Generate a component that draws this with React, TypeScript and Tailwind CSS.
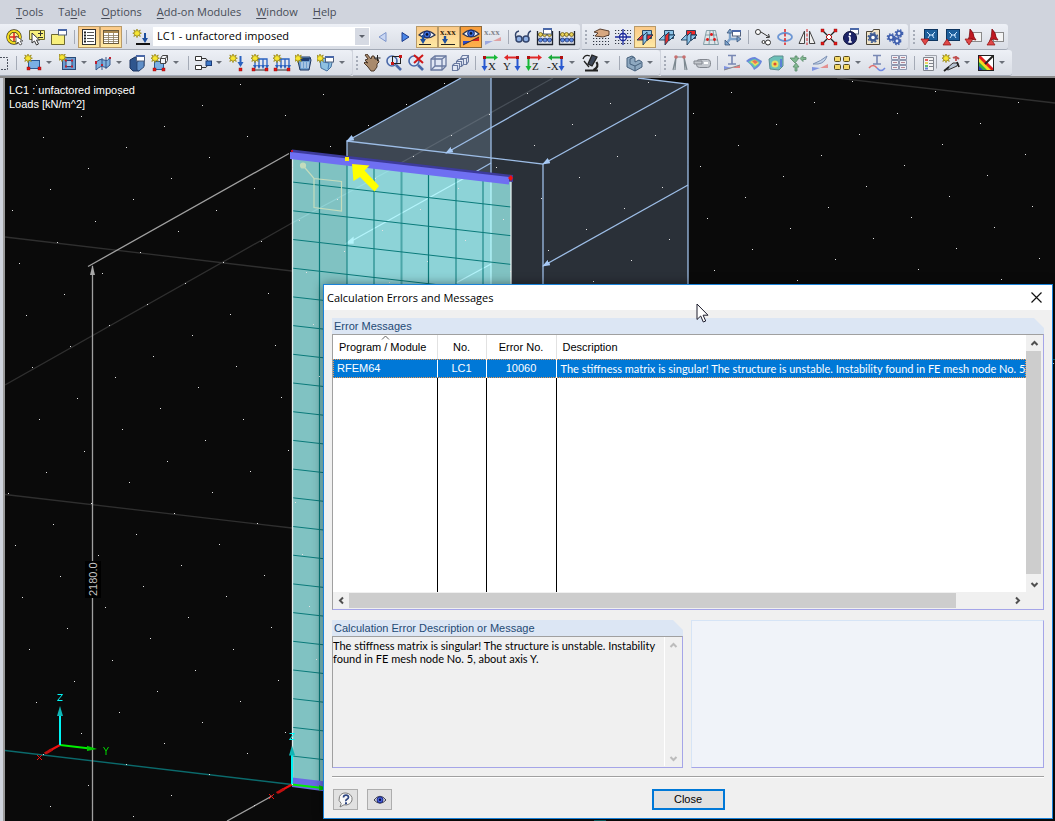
import React from "react";

type Node = React.ReactNode;

/* ---------- icon building blocks (18 x 18 canvas) ---------- */

const Star = ({ x = 0, y = 0 }: { x?: number; y?: number }) => (
  <path
    transform={`translate(${x} ${y})`}
    d="M4 0l.9 2.3L7.3 1 6.2 3.3 8.4 4.2 6.2 5 7.3 7.4 4.9 6.2 4 8.6 3.1 6.2.8 7.4 1.9 5-.2 4.2l2.1-.9L.8 1l2.3 1.3z"
    fill="#f7e632"
    stroke="#8f7d10"
    strokeWidth=".7"
  />
);

const Red = ({ x, y }: { x: number; y: number }) => (
  <rect x={x} y={y} width="3" height="3" fill="#e01818" stroke="#8c0808" strokeWidth=".4" />
);

const Win = ({ x, y }: { x: number; y: number }) => (
  <g>
    <rect x={x + 0.5} y={y + 0.5} width="8" height="5.5" fill="#fff" stroke="#51607c" />
    <rect x={x} y={y} width="9" height="2" fill="#4a68a8" />
  </g>
);

const Eye = ({ y = 0 }: { y?: number }) => (
  <g transform={`translate(0 ${y})`}>
    <path d="M1 6Q9-2 17 6Q9 12 1 6z" fill="#f4f7ff" stroke="#2c3550" strokeWidth="1.2" />
    <circle cx="9" cy="5.4" r="3.4" fill="#3c6fd8" stroke="#16286c" />
    <circle cx="9" cy="5.4" r="1.3" fill="#0b1230" />
  </g>
);

const Plane = ({ flat, upright, back }: { flat: string; upright: string; back: string }) => (
  <g stroke="#1b3a58" strokeWidth=".9" strokeLinejoin="round">
    <rect x="6.5" y="2.5" width="9" height="8" fill={back} />
    <path d="M1 12l5-5h11l-5 5z" fill={flat} />
    <path d="M7 8l4-4v8l-4 5z" fill={upright} />
    <path d="M11 7h6l-5 5h-1z" fill={flat} />
  </g>
);

const Axes = ({ letter, flip, h, v }: { letter: string; flip?: boolean; h: string; v: string }) => (
  <g>
    <g transform={flip ? "translate(18 0) scale(-1 1)" : undefined}>
      <path d="M3 3.5h12" stroke={h} strokeWidth="2" />
      <path d="M13 .5l4 3-4 3z" fill={h} />
      <path d="M3.5 3v10" stroke={v} strokeWidth="2" />
      <path d="M.5 12l3 5 3-5z" fill={v} />
      <rect x="2" y="2" width="3" height="3" fill="#b01010" />
    </g>
    <text x={flip ? 0 : 7} y="16" fontSize="11" fontFamily="Liberation Serif, serif" fill="#1a1a1a">
      {letter}
    </text>
  </g>
);

const Loads = () => (
  <g>
    <path d="M4 5h12v8M8 5v8M12 5v8M4 5v8" fill="none" stroke="#2a62c0" strokeWidth="1.3" />
    <path d="M2 11l2 4 2-4zM6 11l2 4 2-4zM10 11l2 4 2-4zM14 11l2 4 2-4z" fill="#2a62c0" />
    <Star />
    <path d="M4 16h10" stroke="#333" />
    <Red x={1} y={14} />
    <Red x={14} y={14} />
  </g>
);

const Abacus = () => (
  <g>
    <path d="M1.5 3v14M16.5 3v14M1 16.5h16M2 11.5h14M2 6.5h14" stroke="#20242e" strokeWidth="1.3" fill="none" />
    <g fill="#e6cf58" stroke="#665510" strokeWidth=".7">
      <circle cx="4.5" cy="6.5" r="2" />
      <circle cx="8.5" cy="6.5" r="2" />
      <circle cx="13.5" cy="6.5" r="2" />
    </g>
    <g fill="#5a86e0" stroke="#1d3474" strokeWidth=".7">
      <circle cx="4.5" cy="12" r="2" />
      <circle cx="9" cy="12" r="2" />
      <circle cx="13.5" cy="12" r="2" />
    </g>
  </g>
);

const Xxx = ({ fill }: { fill: string }) => (
  <text x="0" y="7" fontSize="9" fontWeight="bold" fontFamily="Liberation Serif, serif" fill={fill}>
    x.xx
  </text>
);

const Monitor = () => (
  <g>
    <rect x="4.5" y="1.5" width="13" height="11" fill="#1d5f9c" stroke="#0e3560" />
    <path d="M7 4l3 3-2 3M15 4l-3 3 2 3M9 7h5" stroke="#c8e4ff" fill="none" />
  </g>
);

const Pdf = () => (
  <g>
    <rect x="7.5" y="4.5" width="10" height="9" fill="#f4f4f4" stroke="#8a8a8a" />
    <path d="M6 1q4 4 4 8l2 3-5-1-4 4q3-6 3-14z" fill="#c01820" stroke="#7c0a10" strokeWidth=".8" />
  </g>
);

const DownRed = () => <path d="M1 11h8l-4 6z" fill="#e04848" stroke="#8c1010" strokeWidth=".7" />;
const UpRed = () => <path d="M1 17h8l-4-6z" fill="#e04848" stroke="#8c1010" strokeWidth=".7" />;

const Zoomer = () => (
  <g>
    <circle cx="7" cy="7" r="5" fill="#dfeaf8" stroke="#4a68a8" strokeWidth="1.6" />
    <path d="M11 11l5 5" stroke="#4a68a8" strokeWidth="2.6" />
  </g>
);

const icons: Record<string, Node> = {
  target: (
    <g>
      <circle cx="8" cy="9" r="6" fill="#fff4a0" stroke="#3c3510" strokeWidth="3.4" />
      <circle cx="8" cy="9" r="6" fill="none" stroke="#f4dc20" strokeWidth="2.2" />
      <path d="M8 5v8M4 9h8" stroke="#e02020" strokeWidth="1.5" />
      <path d="M10 8v8l2-2 2 3 2-1-2-3h3z" fill="#fff" stroke="#444" strokeWidth=".8" />
    </g>
  ),
  pickBox: (
    <g>
      <path d="M1.5 2.5h15v9h-15z" fill="#f8f07c" stroke="#6e6a30" />
      <path d="M10 5.5h5M12.5 3v5M10 9.5h5" stroke="#333" />
      <path d="M4 5v10l2.5-2 2 4 2-1-2-4h3z" fill="#fff" stroke="#333" />
    </g>
  ),
  folder: (
    <g>
      <path d="M1.5 6.5h13v10h-13z" fill="#f8f07c" stroke="#6e6a30" />
      <Win x={8} y={1} />
    </g>
  ),
  list: (
    <g>
      <rect x="2.5" y="1.5" width="13" height="15" fill="#fff" stroke="#333" />
      <path d="M4 4.5h2M4 7.5h2M4 10.5h2M4 13.5h2" stroke="#222" strokeWidth="2" />
      <path d="M7 4.5h7M7 7.5h7M7 10.5h7M7 13.5h7" stroke="#555" />
    </g>
  ),
  table: (
    <g>
      <rect x="1.5" y="2.5" width="15" height="13" fill="#fff" stroke="#6a5a3c" />
      <path d="M2 4h14" stroke="#a88850" strokeWidth="2" />
      <path d="M2 7.5h14M2 9.5h14M2 11.5h14M2 13.5h14M6.5 5v10M11.5 5v10" stroke="#8c7c60" strokeWidth=".8" />
    </g>
  ),
  newLoad: (
    <g>
      <Star x={1} y={1} />
      <path d="M13 5v7" stroke="#1d4f9e" strokeWidth="2" />
      <path d="M10 10h6l-3 5z" fill="#1d4f9e" />
      <path d="M4 16h14" stroke="#111" strokeWidth="2" />
    </g>
  ),
  prev: <path d="M12 4.5v9L5 9z" fill="#c8d6f2" stroke="#7e96cc" />,
  next: <path d="M6 4.5v9L13 9z" fill="#4a86e8" stroke="#1c3c8c" />,
  eyeArrow: (
    <g>
      <Eye y={1} />
      <path d="M5 7v6" stroke="#1d4f9e" strokeWidth="2.4" />
      <path d="M2 11h6l-3 5z" fill="#1d4f9e" />
      <path d="M1 16.5h12" stroke="#222" />
    </g>
  ),
  xArrow: (
    <g>
      <Xxx fill="#3c2c10" />
      <path d="M5 8v5" stroke="#1d4f9e" strokeWidth="2.4" />
      <path d="M2 11h6l-3 5z" fill="#1d4f9e" />
      <path d="M1 16.5h14" stroke="#222" />
    </g>
  ),
  eyeSlope: (
    <g>
      <Eye />
      <path d="M1 17v-4h8z" fill="#2a48c8" />
      <path d="M17 9v4H9z" fill="#d82020" />
      <path d="M1 17L17 9" stroke="#222" strokeWidth=".8" />
    </g>
  ),
  xSlope: (
    <g opacity=".8">
      <Xxx fill="#6c7078" />
      <path d="M1 17v-4h8z" fill="#8a9ae0" />
      <path d="M17 9v4H9z" fill="#e09090" />
    </g>
  ),
  glasses: (
    <g fill="#8fb0e4" stroke="#33456c" strokeWidth="1.5">
      <path d="M2 10Q0 4 5 3M14 8q0-4 3-5" fill="none" />
      <circle cx="5" cy="11" r="3" />
      <circle cx="12" cy="11" r="3" />
    </g>
  ),
  abacusWin: (
    <g>
      <Abacus />
      <Win x={7} y={0} />
    </g>
  ),
  abacus: <Abacus />,
  handGrid: (
    <g>
      <path d="M1 7.5h16M1 10.5h16M1 13.5h16M1 16.5h16" stroke="#2f3542" strokeWidth="1.2" strokeDasharray="1.2 1.8" />
      <path d="M2 4l6-3 9 2v4l-6 2-8-1 3-3z" fill="#d8a880" stroke="#5a4030" />
    </g>
  ),
  gridCross: (
    <g>
      <path d="M1 2.5h16M1 5.5h16M1 12.5h16M1 15.5h16" stroke="#2f3542" strokeWidth="1.2" strokeDasharray="1.2 1.8" />
      <circle cx="9" cy="9" r="3.5" fill="#fff" stroke="#1c2a9c" strokeWidth="1.3" />
      <path d="M9 1v16M1 9h16" stroke="#1c2a9c" strokeWidth="1.3" />
    </g>
  ),
  planeXY: <Plane flat="#e83030" upright="#8cc4e8" back="#8cc4e8" />,
  planeYZ: <Plane flat="#8cc4e8" upright="#e83030" back="#8cc4e8" />,
  planeXZ: <Plane flat="#8cc4e8" upright="#8cc4e8" back="#f02828" />,
  mesh: (
    <g>
      <path d="M4.5 2.5h9l3 14h-15zM8 2.5l-1 14M11 2.5l2 14M4 7h11M3 12h13" fill="#dfe6ea" stroke="#6c8c94" strokeWidth=".8" />
      <g fill="#e01818">
        <circle cx="9.5" cy="6.5" r="1.4" />
        <circle cx="5.5" cy="11.5" r="1.4" />
        <circle cx="12.5" cy="11.5" r="1.4" />
      </g>
    </g>
  ),
  axisWin: (
    <g>
      <path d="M6 2v9l-4 5M6 11h9" stroke="#7fa4cc" strokeWidth="2.4" fill="none" />
      <path d="M3 5l3-4 3 4zM13 8l4 3-4 3zM1 12v5h5z" fill="#7fa4cc" stroke="#2f4a70" strokeWidth=".7" />
      <Win x={8} y={2} />
    </g>
  ),
  move: (
    <g fill="#fff" stroke="#333">
      <circle cx="4" cy="4" r="2.5" />
      <circle cx="14" cy="14.5" r="2.5" />
      <circle cx="9.5" cy="14" r="1.5" />
      <path d="M7 4l8 5M12 9.5l3.5-.2L14.5 6" fill="none" />
    </g>
  ),
  rotate: (
    <g fill="none">
      <ellipse cx="9" cy="9" rx="7" ry="4" stroke="#6c96d4" strokeWidth="1.8" />
      <path d="M9 1v16" stroke="#e02020" strokeWidth="1.5" strokeDasharray="3 1.5" />
    </g>
  ),
  mirror: (
    <g fill="#f0f0f0" stroke="#444">
      <path d="M6.5 3v12.5H1zM11.5 3v12.5H17z" />
      <path d="M9 1v16" stroke="#d02020" strokeDasharray="3 1.5" />
    </g>
  ),
  nodes: (
    <g>
      <path d="M3 3l12 12M15 3L3 15" stroke="#222" strokeWidth="1.3" />
      <path d="M6 9l3-3 3 3-3 3z" fill="#fff" stroke="#c01010" />
      <Red x={1} y={1} />
      <Red x={14} y={1} />
      <Red x={1} y={14} />
      <Red x={14} y={14} />
    </g>
  ),
  info: (
    <g>
      <Win x={8} y={0} />
      <circle cx="8" cy="10" r="6.5" fill="#1c2468" stroke="#0c1038" />
      <path d="M8 8.5v5.5M6.5 8.5H8M6.3 14h3.5" stroke="#fff" strokeWidth="1.6" />
      <circle cx="8" cy="6" r="1.2" fill="#fff" />
    </g>
  ),
  gearWin: (
    <g>
      <path d="M2.5 3.5h6l1-2h6v15h-13z" fill="#f0e4c8" stroke="#4c4638" />
      <circle cx="9" cy="9.5" r="3" fill="#fff" stroke="#3c5a94" strokeWidth="2.4" />
      <circle cx="9" cy="9.5" r="4.8" fill="none" stroke="#3c5a94" strokeWidth="1.4" strokeDasharray="2 1.77" />
    </g>
  ),
  gears: (
    <g fill="#e6ecfa" stroke="#3f5fae" strokeWidth="1.8">
      <circle cx="5" cy="9.5" r="2.3" />
      <circle cx="13" cy="5.5" r="2.3" />
      <circle cx="11" cy="13" r="2.3" />
      <g fill="none" strokeWidth="1.4" strokeDasharray="1.5 1.5">
        <circle cx="5" cy="9.5" r="3.7" />
        <circle cx="13" cy="5.5" r="3.7" />
        <circle cx="11" cy="13" r="3.7" />
      </g>
    </g>
  ),
  monDown: (
    <g>
      <Monitor />
      <DownRed />
    </g>
  ),
  monUp: (
    <g>
      <Monitor />
      <UpRed />
    </g>
  ),
  pdfDown: (
    <g>
      <Pdf />
      <DownRed />
    </g>
  ),
  pdfUp: (
    <g>
      <Pdf />
      <UpRed />
    </g>
  ),
  newRect: (
    <g>
      <rect x="4.5" y="6.5" width="11" height="8" fill="#7ab0e4" stroke="#2b5a94" />
      <Star />
      <Red x={3} y={13} />
      <Red x={14} y={13} />
    </g>
  ),
  opening: (
    <g>
      <rect x="3.5" y="3.5" width="13" height="12" fill="#6c9cd0" stroke="#2b4a78" />
      <rect x="7" y="6.5" width="6" height="6" fill="#a8c8ec" stroke="#2b4a78" />
      <Star x={-1} y={-1} />
      <g fill="#c02030">
        <rect x="6" y="5.5" width="2" height="2" />
        <rect x="12" y="5.5" width="2" height="2" />
        <rect x="6" y="11.5" width="2" height="2" />
        <rect x="12" y="11.5" width="2" height="2" />
      </g>
    </g>
  ),
  curved: (
    <g>
      <path d="M2 8q4-4 8-2t6-3v8q-3 4-6 2t-8 3z" fill="#7fb0dc" stroke="#39598c" />
      <path d="M8 4v12M12 3v12" stroke="#39598c" />
      <g fill="#c02030">
        <rect x="1" y="7" width="2" height="3" />
        <rect x="7" y="10" width="2" height="2" />
        <rect x="15" y="3" width="2" height="2" />
      </g>
    </g>
  ),
  solidWin: (
    <g>
      <path d="M1 6l5-3h9v9l-5 5H4l-3-3z" fill="#2f568e" stroke="#1c3460" />
      <path d="M8 8l7-4v9l-5 4-2-1z" fill="#5f8fc8" stroke="#1c3460" strokeWidth=".7" />
      <Win x={7} y={1} />
    </g>
  ),
  newSolid: (
    <g>
      <rect x="3.5" y="7.5" width="9" height="8" fill="#7ab0e4" stroke="#2b5a94" />
      <path d="M9.5 4.5h5v5h-5zM9.5 4.5l2-3h5l-2 3M14.5 9.5l2-3v-5" fill="#f2f4f8" stroke="#444" />
      <Star />
      <Red x={2} y={14} />
      <Red x={11} y={14} />
    </g>
  ),
  flow: (
    <g>
      <path d="M1.5 2.5h6v4h-6zM1.5 11.5h6v4h-6z" fill="#fff" stroke="#333" />
      <path d="M8 4.5h4l2 3M8 13.5h4l2-3" fill="none" stroke="#333" />
      <rect x="12" y="7" width="5.5" height="4.5" fill="#3c78c8" stroke="#1c3c78" />
    </g>
  ),
  nodalLoad: (
    <g>
      <Star />
      <path d="M11.5 2v9" stroke="#2a62c0" strokeWidth="2" />
      <path d="M8.5 8h6l-3 5z" fill="#2a62c0" />
      <Red x={10} y={14} />
    </g>
  ),
  loads: <Loads />,
  solidLoad: (
    <g>
      <path d="M5 3h10l1 3-2 10H5L3 7z" fill="#6f9fce" stroke="#1c3460" />
      <path d="M5 4h10l-1 3H6z" fill="#1f3c70" />
      <path d="M7 8v6M10 8v6M13 8v6" stroke="#dfe8f4" />
      <Star x={-1} />
    </g>
  ),
  genLoad: (
    <g>
      <path d="M3 6l5-2h8l-2 9-4 4-6-3z" fill="#8fc0e0" stroke="#4470a0" />
      <path d="M6 8l6 1-1 6" fill="none" stroke="#3f78b8" />
      <Star x={-1} />
      <Win x={8} y={2} />
    </g>
  ),
  hand: (
    <g>
      <path
        d="M2 6l3-1-3-4 2-1 4 5 1-3h2l1 3 3 0 1 3-2 2v3l-3 4H8l-3-4-4-4 1-1 3 1z"
        fill="#a98a6c"
        stroke="#4a382a"
      />
      <path d="M14.5 1v6M11.5 4h6" stroke="#222" />
    </g>
  ),
  zoomWin: (
    <g>
      <Zoomer />
      <rect x="7.5" y="2.5" width="8" height="7" fill="none" stroke="#222" />
      <path d="M6 8h3v3H6zM14 1h3v3h-3z" fill="#c81818" />
    </g>
  ),
  zoomX: (
    <g>
      <Zoomer />
      <path d="M7 1l9 8M16 1L7 9" stroke="#d01818" strokeWidth="2" />
    </g>
  ),
  cube: (
    <g fill="#dfe6f4" stroke="#6a7aa0" strokeWidth="1.3">
      <path d="M2 5l4-3h11v10l-4 4H2z" />
      <path d="M2 5h11v11M13 5l4-3M6 2v10h11M6 12l-4 4" fill="none" />
    </g>
  ),
  cubes: (
    <g fill="#e4e9f5" stroke="#6a7aa0" strokeWidth="1.1">
      <path d="M9.5 4.5l2-3h6v6l-2 3h-6zM9.5 4.5h6v6M15.5 4.5l2-3" />
      <path d="M5.5 7.5l2-2h5v5l-2 2h-5zM5.5 7.5h5v5" />
      <path d="M1.5 11.5l2-2h5v5l-2 2h-5zM1.5 11.5h5v5" />
    </g>
  ),
  axX: <Axes letter="X" h="#18b838" v="#2858d0" />,
  axY: <Axes letter="Y" flip h="#e02828" v="#2858d0" />,
  axZ: <Axes letter="Z" h="#e02828" v="#18b838" />,
  axNX: <Axes letter="-X" flip h="#18a838" v="#2858d0" />,
  scope: (
    <g>
      <path d="M10 1l5 2-5 9-4-2z" stroke="#222" strokeWidth="1.3" fill="#3c4658" />
      <path d="M3 16.5h13M14.5 8q3 5-3 8" stroke="#222" strokeWidth="2.2" fill="none" />
      <path d="M1 5q2-5 7-3M2 7l5 6" stroke="#222" fill="none" strokeWidth="1.3" />
    </g>
  ),
  block: (
    <g fill="#8ea8c0" stroke="#46607c">
      <path d="M2 4l5-2 3 2v4l4-2 3 2v5l-7 4-8-4z" />
      <path d="M5 5v5l5 2 6-3M10 12v5M5 5l4-2" fill="none" />
    </g>
  ),
  frame: (
    <g>
      <path d="M2 16L5 3h8l3 13M5 3l-1 13M13 3l1 13" stroke="#7c8890" strokeWidth="1.2" fill="none" />
      <g fill="#c87070">
        <circle cx="5" cy="3" r="1.8" />
        <circle cx="13" cy="3" r="1.8" />
      </g>
    </g>
  ),
  capsule: (
    <g fill="#c4c8ce" stroke="#82878f">
      <rect x="3.5" y="5.5" width="14" height="8" rx="3" />
      <path d="M1 7h8v3H1z" />
      <path d="M11 9h4" stroke="#fff" strokeWidth="2" />
    </g>
  ),
  beamI: (
    <g>
      <path d="M5 1.5h8M9 2v8M5 10h8" stroke="#7888b4" strokeWidth="1.6" />
      <path d="M1 16v-4l8 2z" fill="#8094e0" />
      <path d="M17 11v3H9z" fill="#e48080" />
      <path d="M1 16l16-5" stroke="#888" />
    </g>
  ),
  rainbow: (
    <g>
      <path d="M1 7q4-4 9-4l7 4q-1 5-8 9-2-5-8-9z" fill="#6a86dc" />
      <path d="M3 8q4-3 7-3l5 3q-1 3-6 6-2-4-6-6z" fill="#60ccaa" />
      <path d="M5 8q3-2 5-2l4 3-4 3q-2-3-5-4z" fill="#f0dc5c" />
      <path d="M7 7l3-1 3 2-3 2z" fill="#e87058" />
    </g>
  ),
  heat: (
    <g>
      <path d="M2 5l5-3h9v10l-4 4-9-1z" fill="#6cc0b8" stroke="#5c8c90" />
      <circle cx="8" cy="10" r="3.5" fill="#e8e060" />
      <circle cx="8" cy="10" r="1.6" fill="#e05030" />
      <path d="M14 5v8" stroke="#5c80d8" strokeWidth="2" />
    </g>
  ),
  supports: (
    <g fill="#80b890" stroke="#5c8c6c" strokeWidth=".8">
      <path d="M6 17v-4H4l3-4 3 4H8v4zM11 4.5l3-3v2h3v2h-3v2zM1 4h5V2h2v2h2l-4 5z" />
    </g>
  ),
  section: (
    <g>
      <path d="M2 10q8-3 14-8-2 7-9 8z" fill="#c4d4e8" stroke="#7c90b4" />
      <path d="M1 17v-4l8 1z" fill="#8094e0" />
      <path d="M17 10v4H9z" fill="#e49090" />
    </g>
  ),
  tiles: (
    <g fill="#f4d868" stroke="#54481c">
      <rect x="1.5" y="2.5" width="6" height="5" rx="1" />
      <rect x="10.5" y="2.5" width="6" height="5" rx="1" />
      <rect x="1.5" y="10.5" width="6" height="5" rx="1" />
      <rect x="10.5" y="10.5" width="6" height="5" rx="1" />
    </g>
  ),
  beamSine: (
    <g fill="none">
      <path d="M5 1.5h8M9 2v8M5 10h8" stroke="#7888b4" strokeWidth="1.6" />
      <path d="M1 14q4-5 8 0" stroke="#e07070" strokeWidth="1.5" />
      <path d="M9 14q4 5 8 0" stroke="#7088e0" strokeWidth="1.5" />
    </g>
  ),
  panels: (
    <g fill="#eef0f6" stroke="#9098b0">
      <path d="M1.5 1.5h7v4h-7zM9.5 1.5h7v4h-7zM1.5 6.5h7v4h-7zM9.5 6.5h7v4h-7zM1.5 11.5h7v4h-7zM9.5 11.5h7v4h-7z" />
      <path d="M3 3.5h4M11 3.5h4M3 8.5h4M11 8.5h4M3 13.5h4M11 13.5h4" stroke="#b88894" />
    </g>
  ),
  report: (
    <g>
      <path d="M3.5 3.5h10v13h-10z" fill="#f4f4f4" stroke="#80848c" />
      <path d="M5 1.5h11.5v13" fill="none" stroke="#a0a4ac" />
      <path d="M5 6h3" stroke="#e06060" strokeWidth="2" />
      <path d="M5 9h3" stroke="#e8d860" strokeWidth="2" />
      <path d="M5 12h3" stroke="#60b870" strokeWidth="2" />
      <path d="M5 14.5h3" stroke="#6080d8" strokeWidth="2" />
      <path d="M9 6.5h4M9 9.5h4M9 12.5h4" stroke="#80848c" />
    </g>
  ),
  tools: (
    <g>
      <path d="M4 15l7-6 5 0-1 3-9 4z" fill="#b8c4d4" stroke="#333" />
      <path d="M11 4q3-2 6 1M14 2v5" stroke="#c05050" strokeWidth="1.8" fill="none" />
      <path d="M2 17l5-4M15 8l2 5" stroke="#222" strokeWidth="1.8" />
      <Star />
    </g>
  ),
  colours: (
    <g>
      <rect x="1.5" y="1.5" width="15" height="15" fill="#fff" stroke="#222" />
      <path d="M2 2h2l12 12v2H2z" fill="#e02020" />
      <path d="M2 4l12 12H2z" fill="#f4dc20" />
      <path d="M2 8l8 8H2z" fill="#30b040" />
      <path d="M2 12l4 4H2z" fill="#2840c0" />
      <path d="M8 10l8-8" stroke="#222" strokeWidth="2" />
    </g>
  ),
};

function Glyph({ name }: { name: string }) {
  return (
    <svg viewBox="0 0 18 18" className="size-[18px] shrink-0" aria-hidden="true">
      {icons[name]}
    </svg>
  );
}

/* ---------- toolbar parts ---------- */

function Tool({ name, tone = "plain" }: { name: string; tone?: "plain" | "on" | "hot" }) {
  const tones = {
    plain: "border-transparent",
    on: "border-[#b89a68] bg-linear-to-b from-[#fbc987] to-[#fee9a4]",
    hot: "border-[#8c6a3c] bg-linear-to-b from-[#f79c3a] to-[#fdb04c]",
  };
  return (
    <button type="button" aria-label={name} className="flex w-[22px] shrink-0 items-center justify-center">
      <span className={`flex size-[22px] items-center justify-center border ${tones[tone]}`}>
        <Glyph name={name} />
      </span>
    </button>
  );
}

const Sep = () => (
  <span className="flex w-2 shrink-0 justify-center">
    <span className="h-[14px] w-px bg-[#a4aab6]" />
  </span>
);

const Grip = () => (
  <svg viewBox="0 0 8 18" className="h-[18px] w-2 shrink-0" aria-hidden="true">
    <path d="M4 2v15" stroke="#a6acb8" strokeWidth="2" strokeDasharray="2 2" />
  </svg>
);

const Drop = () => (
  <button type="button" aria-label="More" className="flex w-[13px] shrink-0 items-center pl-[2px]">
    <svg viewBox="0 0 6 3" className="h-[3px] w-[6px]" aria-hidden="true">
      <path d="M0 0h6L3 3z" fill="#6b7079" />
    </svg>
  </button>
);

function Tools({ items }: { items: string }) {
  return (
    <>
      {items.split(" ").map((item, i) => {
        if (item === "|") return <Sep key={i} />;
        if (item === "v") return <Drop key={i} />;
        if (item === ":") return <Grip key={i} />;
        if (item.startsWith("+")) return <Tool key={i} name={item.slice(1)} tone="on" />;
        if (item.startsWith("*")) return <Tool key={i} name={item.slice(1)} tone="hot" />;
        return <Tool key={i} name={item} />;
      })}
    </>
  );
}

function Bar({ children }: { children: Node }) {
  return (
    <div className="flex h-[26px] shrink-0 items-center rounded-r-[3px] border-b border-[#a3aab6] bg-linear-to-b from-[#edf0f6] to-[#d9dde5] pr-[2px]">
      {children}
    </div>
  );
}

function Header() {
  const menus = ["Tools", "Table", "Options", "Add-on Modules", "Window", "Help"];
  const mnemonic: Record<string, number> = { Table: 2 };
  return (
    <header className="shrink-0 overflow-hidden bg-[#d0d4dd]">
      <nav className="flex h-6 items-center gap-[15px] pl-4 text-[11px] text-[#474c57]">
        {menus.map((m) => {
          const k = mnemonic[m] ?? 0;
          return (
            <button key={m} type="button" className="whitespace-nowrap">
              {m.slice(0, k)}
              <span className="underline underline-offset-2">{m[k]}</span>
              {m.slice(k + 1)}
            </button>
          );
        })}
      </nav>
      <div className="flex gap-[2px]">
        <Bar>
          <span className="w-1" />
          <Tools items="target pickBox folder | +list +table | newLoad" />
          <div className="relative mr-[2px] ml-px flex h-[19px] w-[217px]">
            <select
              aria-label="Load case"
              className="h-full w-full appearance-none bg-white pl-1 text-[11px] text-black"
              defaultValue="LC1"
            >
              <option value="LC1">LC1 - unfactored imposed</option>
            </select>
            <span className="pointer-events-none absolute top-px right-px flex h-[17px] w-[14px] items-center justify-center bg-[#d6dae3]">
              <svg viewBox="0 0 6 3" className="h-[3px] w-[6px]" aria-hidden="true">
                <path d="M0 0h6L3 3z" fill="#5c616b" />
              </svg>
            </span>
          </div>
          <Tools items="prev next +eyeArrow +xArrow *eyeSlope xSlope | glasses abacusWin abacus" />
        </Bar>
        <Bar>
          <Tools items=": handGrid gridCross +planeXY planeYZ planeXZ mesh axisWin | move rotate mirror nodes info gearWin gears" />
        </Bar>
        <Bar>
          <Tools items=": monDown monUp pdfDown pdfUp" />
        </Bar>
      </div>
      <div className="flex gap-px">
        <Bar>
          <svg viewBox="0 0 12 16" className="h-4 w-3" aria-hidden="true">
            <path d="M0 2.5h7.5v12H0" fill="none" stroke="#4c525e" strokeDasharray="2 1" />
          </svg>
          <Sep />
          <span className="w-[2px]" />
          <Tools items="newRect v opening v curved v solidWin newSolid v | flow v nodalLoad loads loads solidLoad genLoad v" />
        </Bar>
        <Bar>
          <Tools items=": hand zoomWin zoomX cube cubes | axX axY axZ axNX v scope v | block v" />
        </Bar>
        <Bar>
          <Tools items=": frame capsule | beamI rainbow heat supports section tiles v beamSine panels | report tools v colours v" />
        </Bar>
      </div>
    </header>
  );
}

/* ---------- 3D work window ---------- */

const stars: [number, number][] = [];
for (let i = -6; i < 24; i++) {
  for (let j = -30; j < 50; j++) {
    const x = Math.round(240 + 83 * i - 38.05 * j);
    const y = Math.round(84 + 10.1 * i + 21.07 * j);
    if (x > 5 && x < 1055 && y > 78 && y < 821) stars.push([x, y]);
  }
}

const meshRows = Array.from({ length: 21 }, (_, i) => 182 + i * 28.7);
const meshCols = [319.5, 347, 374, 401.5, 428.5, 456, 483];

function Triad({ x, y }: { x: number; y: number }) {
  return (
    <g transform={`translate(${x} ${y})`} strokeWidth="2">
      <path d="M0 0L-11 6" stroke="#f01010" />
      <path d="M-9 3.5l-7 4q1 3 4 1l5-3z" fill="#c01010" />
      <path d="M0 0L30 3.5" stroke="#00f000" />
      <path d="M27 .8l10 3.2-10 2z" fill="#00c800" />
      <path d="M0 0V-32" stroke="#00f4f4" />
      <path d="M0-39l3 10h-6z" fill="#10b4b4" />
    </g>
  );
}

function Scene() {
  return (
    <svg
      viewBox="5 78 1050 743"
      preserveAspectRatio="xMinYMin slice"
      className="absolute inset-0 size-full"
      role="img"
      aria-label="Structural model with surface load"
    >
      <defs>
        <marker id="tip" viewBox="0 0 8 6" refX="7" refY="3" markerWidth="8" markerHeight="6" orient="auto" markerUnits="userSpaceOnUse">
          <path d="M0 0l8 3-8 3z" fill="#a6c8f4" />
        </marker>
      </defs>
      <rect x="5" y="78" width="1050" height="743" fill="#0a0a0a" />
      <path
        d="M5 237L511 297M5 385L292 223L553 78M5 494.5L292 528M837 78L1055 103"
        fill="none"
        stroke="#2f2f2f"
        strokeWidth="1.3"
      />
      <polygon points="347,141 461,78 638,78 688,84 688,320 347,320" fill="#2a3038" />
      <polygon points="347,141 461,78 491,78 491,320 347,320" fill="#44505c" />
      <polygon points="347,142 491,158 491,320 347,320" fill="#3d4652" />
      <path d="M347 193L553 78" stroke="#8a94a0" strokeOpacity=".3" strokeWidth="1.2" />
      <g stroke="#9dbde6" strokeWidth="1.3" fill="none">
        <path d="M347 320V141L543 164V320M491 78V320M638 78L688 84V320" />
        <path d="M461 78L347 141" markerEnd="url(#tip)" />
        <path d="M579 78L446 153" markerEnd="url(#tip)" />
        <path d="M688 84L543 164" markerEnd="url(#tip)" />
        <path d="M688 185L543 266" markerEnd="url(#tip)" />
        <path d="M491 163L470 175" />
      </g>

      <polygon points="292,156 511,181 511,809 292,784" fill="#80c2c2" />
      <polygon points="347,162 491,179 491,806 347,790" fill="#8dd3d7" />
      <g stroke="#b4f4fb" strokeWidth="1.3" fill="none">
        <path d="M470 175L348 243M491 264L456 283M491 179V300" />
        <path d="M347 243l6-5v5z" fill="#b4f4fb" />
        <path d="M292 223L390 170" strokeOpacity=".3" />
      </g>
      <g stroke="#0a7a7a" strokeWidth="1">
        {meshCols.map((x, i) => (
          <path
            key={x}
            d={`M${x} ${156 + (x - 292) * 0.114}V784`}
            strokeWidth={i % 4 === 0 ? 1.2 : 2}
            strokeOpacity={i % 4 === 0 ? 1 : 0.5}
          />
        ))}
        {meshRows.map((y) => (
          <path key={y} d={`M292 ${y}L511 ${y + 25}`} />
        ))}
      </g>
      <path d="M292.5 157V784M511 181V300" stroke="#e4eeee" strokeWidth="1.3" />
      <g stroke="#c4dcbc" strokeWidth="1.2" fill="none">
        <path d="M303 165.5L314 178.5L341.5 181.5V211L314 207.5V178.5" />
        <circle cx="303" cy="165.5" r="2.5" fill="#c4dcbc" />
      </g>
      <polygon points="292,149.5 513,175 513,182 292,157" fill="#3d3b9c" />
      <polygon points="290,152 509,177 509,184.5 290,159" fill="#6f6ff2" />
      <path d="M508 178l3-3 2 3-2 3z" fill="#f01010" />
      <rect x="291" y="150" width="2" height="2" fill="#c01030" />
      <rect x="345" y="157" width="4" height="4" fill="#fff000" />
      <polygon points="352,164 369.5,165.5 364.5,170.5 379,186 374.5,191.5 360,177 353.5,181" fill="#ff0" />

      <polygon points="292,777.5 330,782 330,792 292,787" fill="#6a6ae4" />
      <path d="M5 750.5L292 784.5" stroke="#0b6a6c" strokeWidth="1.4" />
      <path d="M289 153.5L88 266.5M92.5 266V821M227 821L272 796" stroke="#a0a0a0" strokeWidth="1.3" fill="none" />
      <path d="M92.5 265l2.5 10h-5z" fill="#a8a8a8" />
      <Triad x={60} y={745} />
      <Triad x={292} y={784.5} />
      <g fill="none" strokeWidth="1">
        <path d="M57.5 694.5h5l-5 6h5M289.5 733.5h5l-5 6h5" stroke="#00f4f4" />
        <path d="M103.5 747l2.5 4 2.5-4M106 751v4" stroke="#00d800" />
        <path d="M37 755l5 5M42 755l-5 5M269 794l5 5M274 794l-5 5" stroke="#f01010" />
      </g>
      <path d="M594 820.5h12M1053 359.5h2" stroke="#0b6a6c" />
      <g fill="#e4e4e4">
        {stars.map(([x, y]) => (
          <rect key={`${x}-${y}`} x={x} y={y} width="1" height="1" />
        ))}
      </g>
      <rect x="85" y="561" width="16" height="37" fill="#000" />
      <text
        transform="translate(97 596) rotate(-90)"
        fontSize="11"
        fontFamily="Liberation Sans, sans-serif"
        fill="#c4c4c4"
      >
        2180.0
      </text>
    </svg>
  );
}

/* ---------- dialog ---------- */

function Chevron({ dir, faint = false }: { dir: "up" | "down" | "left" | "right"; faint?: boolean }) {
  const paths = { up: "M1.5 6l3-3 3 3", down: "M1.5 3l3 3 3-3", left: "M6 1.5l-3 3 3 3", right: "M3 1.5l3 3-3 3" };
  return (
    <svg viewBox="0 0 9 9" className="size-[9px]" aria-hidden="true">
      <path d={paths[dir]} fill="none" stroke={faint ? "#bcbcbc" : "#505050"} strokeWidth="2" />
    </svg>
  );
}

function ScrollButton({ dir, faint }: { dir: "up" | "down" | "left" | "right"; faint?: boolean }) {
  return (
    <button type="button" aria-label={`Scroll ${dir}`} className="flex size-4 shrink-0 items-center justify-center">
      <Chevron dir={dir} faint={faint} />
    </button>
  );
}

function GroupTitle({ children, id }: { children: Node; id: string }) {
  return (
    <h2
      id={id}
      className="h-4 shrink-0 bg-[#dce6f4] pl-[2px] leading-4 text-[#1f4a74] [clip-path:polygon(0_0,calc(100%-10px)_0,100%_10px,100%_100%,0_100%)]"
    >
      {children}
    </h2>
  );
}

const message =
  "The stiffness matrix is singular! The structure is unstable. Instability found in FE mesh node No. 5, about axis Y.";

function ErrorTable() {
  return (
    <section className="flex min-h-0 flex-1 flex-col" aria-labelledby="errors">
      <GroupTitle id="errors">Error Messages</GroupTitle>
      <div className="flex min-h-0 flex-1 flex-col border border-t-[#a0a0a0] border-r-[#a5a5e8] border-b-[#a5a5e8] border-l-[#a0a0a0] pr-px pb-px">
        <div className="flex min-h-0 flex-1">
          <div className="min-w-0 flex-1 overflow-hidden bg-white">
            <table className="h-full w-full table-fixed border-collapse text-black">
              <colgroup>
                <col className="w-[104px]" />
                <col className="w-[49px]" />
                <col className="w-[70px]" />
                <col />
              </colgroup>
              <thead>
                <tr className="h-6">
                  <th className="relative border-r border-[#e2e2e2] p-0 pl-[6px] text-left font-normal">
                    Program / Module
                    <svg viewBox="0 0 9 5" className="absolute top-0 left-[48px] h-[5px] w-[9px]" aria-hidden="true">
                      <path d="M1 4.5l3.5-3.5L8 4.5" fill="none" stroke="#606060" />
                    </svg>
                  </th>
                  <th className="border-r border-[#e2e2e2] p-0 font-normal">No.</th>
                  <th className="border-r border-[#e2e2e2] p-0 font-normal">Error No.</th>
                  <th className="p-0 pl-[6px] text-left font-normal">Description</th>
                </tr>
              </thead>
              <tbody>
                <tr className="h-[19px] bg-[#0078d7] text-white outline-1 -outline-offset-1 outline-dotted outline-[#f09a50]">
                  <td className="border-r border-white p-0 pl-1">RFEM64</td>
                  <td className="border-r border-white p-0 text-center">LC1</td>
                  <td className="border-r border-white p-0 text-center">10060</td>
                  <td className="overflow-hidden p-0 pl-1 font-[Lato,'Liberation_Sans',sans-serif] whitespace-nowrap">
                    {message}
                  </td>
                </tr>
                <tr aria-hidden="true">
                  <td className="border-r border-black" />
                  <td className="border-r border-black" />
                  <td className="border-r border-black" />
                  <td />
                </tr>
              </tbody>
            </table>
          </div>
          <div className="flex w-4 shrink-0 flex-col bg-[#f0f0f0]">
            <ScrollButton dir="up" />
            <div className="w-[15px] flex-1 bg-[#cdcdcd]" />
            <div className="h-[2px]" />
            <ScrollButton dir="down" />
          </div>
        </div>
        <div className="flex h-4 shrink-0 items-center bg-[#f0f0f0] pr-[17px]">
          <ScrollButton dir="left" />
          <div className="flex h-[15px] flex-1">
            <div className="h-full w-[92%] bg-[#cdcdcd]" />
          </div>
          <ScrollButton dir="right" />
        </div>
      </div>
    </section>
  );
}

function Dialog() {
  return (
    <div
      role="dialog"
      aria-labelledby="dlg-title"
      className="absolute top-[206px] right-[2px] bottom-[2px] left-[318px] flex flex-col border border-[#1a82d8] bg-[#f0f0f0] font-['Liberation_Sans',Arial,sans-serif] text-[11px] leading-[13px] shadow-[0_0_10px_rgba(0,0,0,0.45)]"
    >
      <div className="flex h-[25px] shrink-0 items-center justify-between bg-white pr-2 pl-[3px]">
        <h1 id="dlg-title" className="font-['Open_Sans','Noto_Sans',sans-serif] text-[11px] text-black">
          Calculation Errors and Messages
        </h1>
        <button type="button" aria-label="Close dialog" className="flex size-4 items-center justify-center">
          <svg viewBox="0 0 11 11" className="size-[11px]" aria-hidden="true">
            <path d="M.5.5l10 10M10.5.5l-10 10" stroke="#111" strokeWidth="1.2" />
          </svg>
        </button>
      </div>
      <div className="flex min-h-0 flex-1 flex-col px-2 pt-2">
        <ErrorTable />
        <div className="mt-[10px] flex h-[148px] shrink-0 gap-2">
          <section className="flex min-w-0 flex-1 flex-col" aria-labelledby="detail">
            <GroupTitle id="detail">Calculation Error Description or Message</GroupTitle>
            <div className="flex min-h-0 flex-1 border border-t-[#a0a0a0] border-r-[#a5a5e8] border-b-[#a5a5e8] border-l-[#a0a0a0] pr-px pb-px">
              <textarea
                readOnly
                aria-labelledby="detail"
                className="min-w-0 flex-1 resize-none overflow-hidden bg-transparent pt-[2px] pr-2 font-[Lato,'Liberation_Sans',sans-serif] text-black outline-none"
                value={message}
              />
              <div className="flex w-[17px] flex-col items-center justify-between border-l border-white">
                <ScrollButton dir="up" faint />
                <ScrollButton dir="down" faint />
              </div>
            </div>
          </section>
          <div className="flex-1 border border-t-[#d6e4f6] border-r-[#a5a5e8] border-b-[#a5a5e8] border-l-[#d6e4f6] bg-[#f0f3f9]" />
        </div>
        <div className="mt-2 h-[2px] shrink-0 border-t border-[#a0a0a0] bg-white" />
        <div className="grid h-10 shrink-0 grid-cols-[1fr_auto_1fr] items-center pt-[3px]">
          <div className="flex gap-[9px] pl-px">
            <button
              type="button"
              aria-label="Help"
              className="flex h-[21px] w-[25px] items-center justify-center border border-[#adadad] bg-[#e1e1e1]"
            >
              <svg viewBox="0 0 16 16" className="size-4" aria-hidden="true">
                <path d="M8 1a6.5 6 0 1 1-2 11.8L2 15l1.2-3.5A6.5 6 0 0 1 8 1z" fill="#f8f8f8" stroke="#7c7c7c" />
                <path d="M5.500 5.500Q5.600 3.200 8 3.200T10.500 5.300Q10.500 6.500 9 7.300T7.900 9.300" fill="none" stroke="#2c4480" strokeWidth="1.700" />
                <rect x="7" y="10.300" width="2" height="2" fill="#2c4480" />
              </svg>
            </button>
            <button
              type="button"
              aria-label="Show in model"
              className="flex h-[21px] w-[25px] items-center justify-center border border-[#adadad] bg-[#e1e1e1]"
            >
              <svg viewBox="0 0 14 10" className="h-[10px] w-[14px]" aria-hidden="true">
                <path d="M1 5Q7-2.5 13 5Q7 11.5 1 5z" fill="#d8dce8" stroke="#3c3c4c" />
                <circle cx="7" cy="4.8" r="3" fill="#4a64e0" stroke="#1c2880" />
                <circle cx="7" cy="4.8" r="1.2" fill="#0c1040" />
              </svg>
            </button>
          </div>
          <button
            type="button"
            className="h-[21px] w-[73px] border-2 border-[#0078d7] bg-[#e1e1e1] text-center text-black"
          >
            Close
          </button>
        </div>
      </div>
    </div>
  );
}

export default function App() {
  return (
    <div className="flex min-h-screen flex-col bg-[#d0d4dd] font-['Open_Sans','Noto_Sans',sans-serif]">
      <Header />
      <main className="flex flex-1 border-t-2 border-[#8c8c8c] pl-[3px]">
        <div className="relative min-h-[600px] flex-1 overflow-hidden border-l-2 border-[#9a9a9a] bg-[#0a0a0a]">
          <Scene />
          <div className="relative pt-[5px] pl-1 font-['Liberation_Sans',Arial,sans-serif] text-[11px] leading-[14px] text-white">
            <p>LC1 : unfactored imposed</p>
            <p>Loads [kN/m^2]</p>
          </div>
          <Dialog />
          <svg viewBox="0 0 13 20" className="pointer-events-none absolute top-[225px] left-[691px] h-5 w-[13px]" aria-hidden="true">
            <path d="M1 1v15.5l3.7-3.5 2.6 6 2.4-1-2.6-5.8H12z" fill="#fff" stroke="#1c1c2c" />
          </svg>
        </div>
      </main>
    </div>
  );
}
